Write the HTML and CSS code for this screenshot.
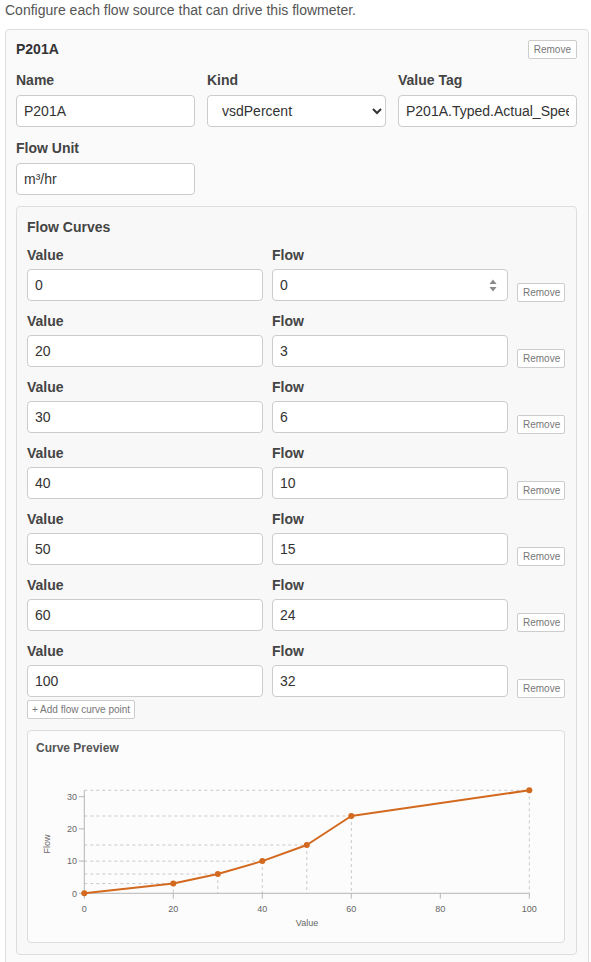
FILE: index.html
```html
<!DOCTYPE html>
<html>
<head>
  <meta charset="UTF-8" />
  <title>Flowmeter Sources</title>
  <link rel="stylesheet" href="styles.css">
</head>
<body>

  <p class="intro">Configure each flow source that can drive this flowmeter.</p>

  <div class="card">
    <div class="card-header">
      <span class="card-title">P201A</span>
      <button class="btn-small">Remove</button>
    </div>

    <div class="source-grid">
      <label class="field">
        <span class="label">Name</span>
        <input class="input" type="text" value="P201A">
      </label>
      <label class="field">
        <span class="label">Kind</span>
        <select class="input select">
          <option>vsdPercent</option>
        </select>
      </label>
      <label class="field">
        <span class="label">Value Tag</span>
        <input class="input" type="text" value="P201A.Typed.Actual_Speed">
      </label>
      <label class="field">
        <span class="label">Flow Unit</span>
        <input class="input" type="text" value="m³/hr">
      </label>
    </div>

    <div class="curves">
      <div class="curves-title">Flow Curves</div>

      <div class="curve-list">
        <div class="curve-row">
          <label class="field tight">
            <span class="label">Value</span>
            <input class="input" type="text" value="0">
          </label>
          <label class="field tight">
            <span class="label">Flow</span>
            <span class="spin-wrap">
              <input class="input" type="text" value="0">
              <svg class="spinner" width="8" height="13" viewBox="0 0 8 13">
                <path d="M4 0.5 L7.5 5 L0.5 5 Z" fill="#8a8a8a"/>
                <path d="M4 12.5 L7.5 8 L0.5 8 Z" fill="#8a8a8a"/>
              </svg>
            </span>
          </label>
          <button class="btn-small">Remove</button>
        </div>

        <div class="curve-row">
          <label class="field tight"><span class="label">Value</span><input class="input" type="text" value="20"></label>
          <label class="field tight"><span class="label">Flow</span><input class="input" type="text" value="3"></label>
          <button class="btn-small">Remove</button>
        </div>

        <div class="curve-row">
          <label class="field tight"><span class="label">Value</span><input class="input" type="text" value="30"></label>
          <label class="field tight"><span class="label">Flow</span><input class="input" type="text" value="6"></label>
          <button class="btn-small">Remove</button>
        </div>

        <div class="curve-row">
          <label class="field tight"><span class="label">Value</span><input class="input" type="text" value="40"></label>
          <label class="field tight"><span class="label">Flow</span><input class="input" type="text" value="10"></label>
          <button class="btn-small">Remove</button>
        </div>

        <div class="curve-row">
          <label class="field tight"><span class="label">Value</span><input class="input" type="text" value="50"></label>
          <label class="field tight"><span class="label">Flow</span><input class="input" type="text" value="15"></label>
          <button class="btn-small">Remove</button>
        </div>

        <div class="curve-row">
          <label class="field tight"><span class="label">Value</span><input class="input" type="text" value="60"></label>
          <label class="field tight"><span class="label">Flow</span><input class="input" type="text" value="24"></label>
          <button class="btn-small">Remove</button>
        </div>

        <div class="curve-row">
          <label class="field tight"><span class="label">Value</span><input class="input" type="text" value="100"></label>
          <label class="field tight"><span class="label">Flow</span><input class="input" type="text" value="32"></label>
          <button class="btn-small">Remove</button>
        </div>
      </div>

      <button class="btn-small add-btn">+ Add flow curve point</button>

      <div class="preview">
        <div class="preview-title">Curve Preview</div>
        <svg class="chart" width="520" height="170" viewBox="0 0 520 170">
          <!-- guide lines -->
          <g stroke="#c8c8c8" stroke-width="1" stroke-dasharray="3 3" fill="none">
            <line x1="48.3" y1="117.6" x2="137.3" y2="117.6"/>
            <line x1="48.3" y1="108" x2="181.8" y2="108"/>
            <line x1="48.3" y1="95.1" x2="226.3" y2="95.1"/>
            <line x1="48.3" y1="79" x2="270.8" y2="79"/>
            <line x1="48.3" y1="50" x2="315.3" y2="50"/>
            <line x1="48.3" y1="24.3" x2="493.3" y2="24.3"/>
            <line x1="137.3" y1="117.6" x2="137.3" y2="127.3"/>
            <line x1="181.8" y1="108" x2="181.8" y2="127.3"/>
            <line x1="226.3" y1="95.1" x2="226.3" y2="127.3"/>
            <line x1="270.8" y1="79" x2="270.8" y2="127.3"/>
            <line x1="315.3" y1="50" x2="315.3" y2="127.3"/>
            <line x1="493.3" y1="24.3" x2="493.3" y2="127.3"/>
          </g>
          <!-- axes -->
          <g stroke="#b5b5b5" stroke-width="1" fill="none">
            <line x1="48.3" y1="127.3" x2="493.3" y2="127.3"/>
            <line x1="48.3" y1="24.3" x2="48.3" y2="127.3"/>
            <line x1="48.3" y1="127.3" x2="48.3" y2="132.5"/>
            <line x1="137.3" y1="127.3" x2="137.3" y2="132.5"/>
            <line x1="226.3" y1="127.3" x2="226.3" y2="132.5"/>
            <line x1="315.3" y1="127.3" x2="315.3" y2="132.5"/>
            <line x1="404.3" y1="127.3" x2="404.3" y2="132.5"/>
            <line x1="493.3" y1="127.3" x2="493.3" y2="132.5"/>
            <line x1="43" y1="127.3" x2="48.3" y2="127.3"/>
            <line x1="43" y1="95.1" x2="48.3" y2="95.1"/>
            <line x1="43" y1="62.9" x2="48.3" y2="62.9"/>
            <line x1="43" y1="30.7" x2="48.3" y2="30.7"/>
          </g>
          <g class="tick" text-anchor="middle">
            <text x="48.3" y="146">0</text>
            <text x="137.3" y="146">20</text>
            <text x="226.3" y="146">40</text>
            <text x="315.3" y="146">60</text>
            <text x="404.3" y="146">80</text>
            <text x="493.3" y="146">100</text>
          </g>
          <g class="tick" text-anchor="end">
            <text x="41" y="130.5">0</text>
            <text x="41" y="98.3">10</text>
            <text x="41" y="66.1">20</text>
            <text x="41" y="33.9">30</text>
          </g>
          <text class="tick" x="271" y="160" text-anchor="middle">Value</text>
          <text class="tick" transform="translate(14 78) rotate(-90)" text-anchor="middle">Flow</text>
          <!-- curve -->
          <polyline fill="none" stroke="#d2691e" stroke-width="2" stroke-linejoin="round"
            points="48.3,127.3 137.3,117.6 181.8,108 226.3,95.1 270.8,79 315.3,50 493.3,24.3"/>
          <g fill="#d2691e">
            <circle cx="48.3" cy="127.3" r="3"/>
            <circle cx="137.3" cy="117.6" r="3"/>
            <circle cx="181.8" cy="108" r="3"/>
            <circle cx="226.3" cy="95.1" r="3"/>
            <circle cx="270.8" cy="79" r="3"/>
            <circle cx="315.3" cy="50" r="3"/>
            <circle cx="493.3" cy="24.3" r="3"/>
          </g>
        </svg>
      </div>
    </div>
  </div>

</body>
</html>
```

FILE: styles.css
```css
body {
  margin: 0;
  padding: 0 0 0 5px;
  background: white;
  color: #333;
  font-family: "Liberation Sans", Arial, sans-serif;
  font-size: 14px;
  overflow: hidden;
}

.intro {
  margin: 0 0 9px;
  line-height: 20px;
  color: #555;
}

.card {
  box-sizing: border-box;
  width: 584px;
  background: #fafafa;
  border: 1px solid #ddd;
  border-radius: 4px;
  padding: 9px 11px 14px 10px;
}

.card-header {
  display: flex;
  justify-content: space-between;
  align-items: center;
  height: 20px;
  margin-bottom: 12px;
}

.card-title {
  font-weight: bold;
  color: #333;
}

.btn-small {
  height: 19px;
  padding: 0 5px;
  font-family: "Liberation Sans", Arial, sans-serif;
  font-size: 10px;
  color: #777;
  background: white;
  border: 1px solid #ccc;
  border-radius: 2px;
  cursor: pointer;
}

.source-grid {
  display: grid;
  grid-template-columns: 1fr 1fr 1fr;
  column-gap: 12px;
  row-gap: 12px;
}

.field {
  display: flex;
  flex-direction: column;
  gap: 6px;
}

.field.tight {
  gap: 5px;
}

.label {
  font-weight: bold;
  line-height: 18px;
  color: #444;
}

.input {
  box-sizing: border-box;
  width: 100%;
  height: 32px;
  padding: 0 7px;
  font-family: "Liberation Sans", Arial, sans-serif;
  font-size: 14px;
  color: #333;
  background: white;
  border: 1px solid #ccc;
  border-radius: 4px;
  outline: none;
}

.select {
  padding-left: 10px;
}

.curves {
  margin-top: 11px;
  background: #f8f8f8;
  border: 1px solid #ddd;
  border-radius: 4px;
  padding: 11px 11px 11px 10px;
}

.curves-title {
  font-weight: bold;
  line-height: 18px;
  color: #444;
  margin-bottom: 10px;
}

.curve-list {
  display: flex;
  flex-direction: column;
  gap: 11px;
}

.curve-row {
  display: grid;
  grid-template-columns: 1fr 1fr 48px;
  column-gap: 9px;
  align-items: end;
}

.curve-row .btn-small {
  margin-bottom: -1px;
}

.spin-wrap {
  position: relative;
  display: block;
}

.spinner {
  position: absolute;
  right: 11px;
  top: 10px;
}

.add-btn {
  display: block;
  margin-top: 3px;
  padding: 0 4px;
}

.preview {
  margin-top: 11px;
  background: #fcfcfc;
  border: 1px solid #ddd;
  border-radius: 4px;
  padding: 9px 8px 6px;
}

.preview-title {
  font-size: 12px;
  font-weight: bold;
  line-height: 16px;
  color: #555;
}

.chart {
  display: block;
  margin-top: 10px;
}

.tick {
  font-family: "Liberation Sans", Arial, sans-serif;
  font-size: 9px;
  fill: #666;
}
```
